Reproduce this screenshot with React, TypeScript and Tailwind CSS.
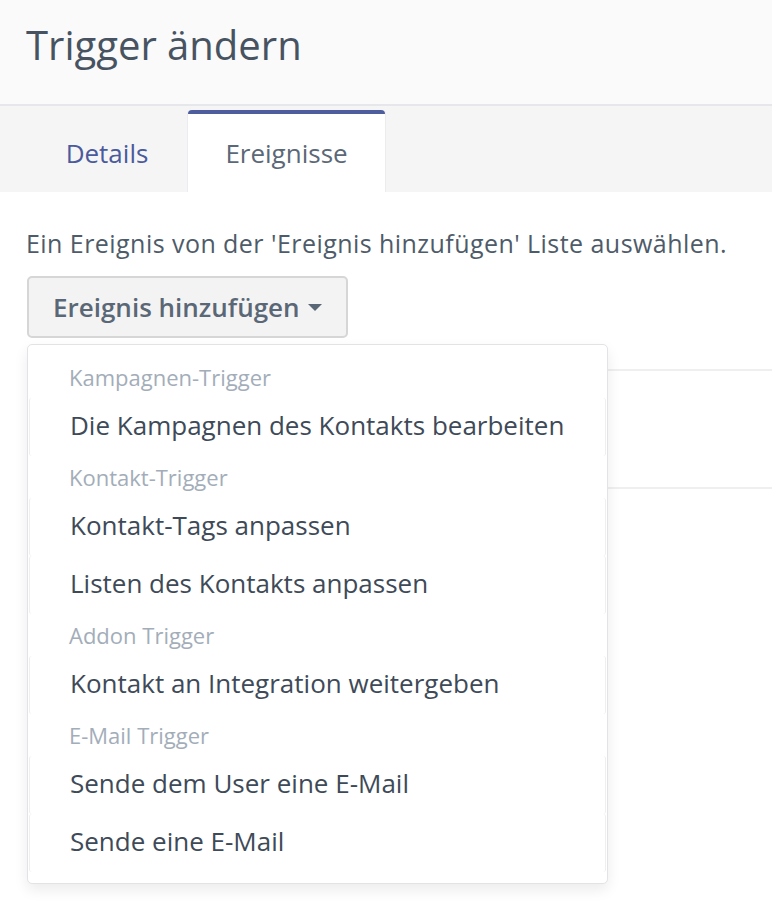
import React from "react";

const groups: { title: string; items: string[] }[] = [
  { title: "Kampagnen-Trigger", items: ["Die Kampagnen des Kontakts bearbeiten"] },
  { title: "Kontakt-Trigger", items: ["Kontakt-Tags anpassen", "Listen des Kontakts anpassen"] },
  { title: "Addon Trigger", items: ["Kontakt an Integration weitergeben"] },
  { title: "E-Mail Trigger", items: ["Sende dem User eine E-Mail", "Sende eine E-Mail"] },
];

export default function App() {
  return (
    <div
      className="w-[772px] h-[918px] bg-white overflow-hidden"
      style={{ fontFamily: '"Open Sans", "Noto Sans", sans-serif' }}
    >
      <div className="h-[104px] bg-[#fafafa] flex items-center pl-[26px]">
        <h1 className="text-[40px] leading-none text-[#475361] font-normal -mt-[14px]">Trigger ändern</h1>
      </div>
      <div className="h-[2px] bg-[#e6e7ea]" />
      <div className="h-[86px] bg-[#f5f5f5] flex items-end pl-[27px]">
        <div className="w-[162px] h-[78px] flex items-center justify-center text-[26px] text-[#4a5a9c] -ml-[1px]">
          Details
        </div>
        <div className="w-[197px] h-[82px] bg-white rounded-t-[4px] border-t-[4px] border-[#4e5d9d] flex items-center justify-center text-[26px] text-[#5b6877] shadow-[1px_0_0_#ececee,-1px_0_0_#ececee]">
          Ereignisse
        </div>
      </div>
      <div className="px-[27px]">
        <p className="mt-[36px] text-[25px] leading-[30px] tracking-[0.45px] text-[#4e5b69] -ml-[1px]">
          Ein Ereignis von der 'Ereignis hinzufügen' Liste auswählen.
        </p>
        <div className="relative mt-[18px]">
          <button className="h-[62px] pl-[24px] pr-[24px] flex items-center gap-[8px] bg-[#f3f3f3] border-2 border-[#d6d6d6] rounded-[5px] text-[26px] font-semibold text-[#5a6776]">
            Ereignis hinzufügen
            <svg width="14" height="8" viewBox="0 0 14 8" className="mt-[2px]">
              <path d="M0 0 L14 0 L7 7 Z" fill="#5a6776" />
            </svg>
          </button>
          <div className="mt-[31px] -mr-[27px] h-[120px] border-y-2 border-[#eef0f0]" />
          <div className="absolute left-0 top-[68px] w-[581px] bg-white border border-[#e2e3e5] rounded-[5px] shadow-[0_6px_14px_rgba(0,0,0,0.08)] py-[11px] z-10">
            {groups.map((g) => (
              <div key={g.title}>
                <div className="h-[42px] flex items-center pl-[41px] text-[22px] text-[#a3adb9]">
                  {g.title}
                </div>
                {g.items.map((it) => (
                  <div
                    key={it}
                    className="h-[58px] flex items-center pl-[40px] pb-[3px] text-[26px] text-[#3e4a58] mx-[1px] border-x border-[#efeff1] rounded-[3px]"
                  >
                    {it}
                  </div>
                ))}
              </div>
            ))}
          </div>
        </div>
      </div>
    </div>
  );
}
